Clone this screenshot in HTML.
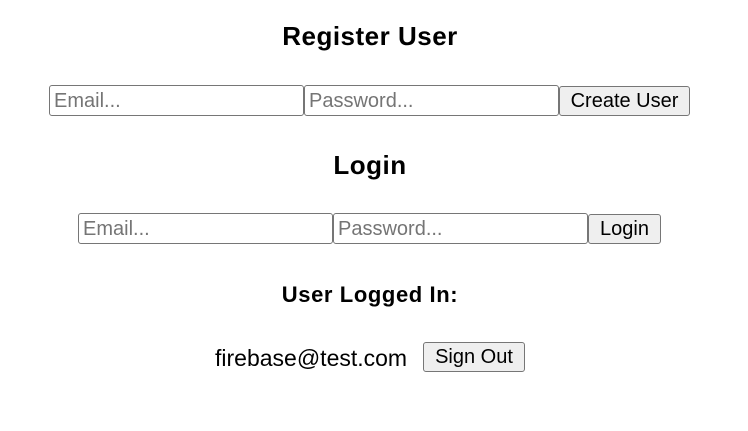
<!DOCTYPE html>
<html><head><meta charset="utf-8"><style>
html,body{margin:0;padding:0;background:#fff;width:748px;height:431px;overflow:hidden;font-family:"Liberation Sans",Arial,sans-serif;color:#000}
.h{position:absolute;left:0;width:740px;text-align:center;font-weight:bold;white-space:nowrap}
.i,.b{position:absolute;box-sizing:border-box;border:1px solid #767676;border-radius:3px;font-size:20px;color:#757575;padding-left:4px;line-height:31px;height:31px;background:#fff;white-space:nowrap}
.b{background:#efefef;color:#000;text-align:center;padding:0;height:30px;line-height:29px}
</style></head><body>
<div class="h" style="top:20px;font-size:26px;line-height:32px;letter-spacing:0.5px">Register User</div>
<div class="i" style="left:49px;top:85px;width:255px">Email...</div>
<div class="i" style="left:304px;top:85px;width:255px">Password...</div>
<div class="b" style="left:559px;top:86px;width:131px">Create User</div>
<div class="h" style="top:149px;font-size:26px;line-height:32px;letter-spacing:0.5px">Login</div>
<div class="i" style="left:78px;top:213px;width:255px">Email...</div>
<div class="i" style="left:333px;top:213px;width:255px">Password...</div>
<div class="b" style="left:588px;top:214px;width:73px">Login</div>
<div class="h" style="top:282px;font-size:22px;line-height:26px;letter-spacing:0.6px">User Logged In:</div>
<div style="position:absolute;left:215px;top:344px;font-size:23px;line-height:28px;white-space:nowrap">firebase@test.com</div>
<div class="b" style="left:423px;top:342px;width:102px">Sign Out</div>
</body></html>
